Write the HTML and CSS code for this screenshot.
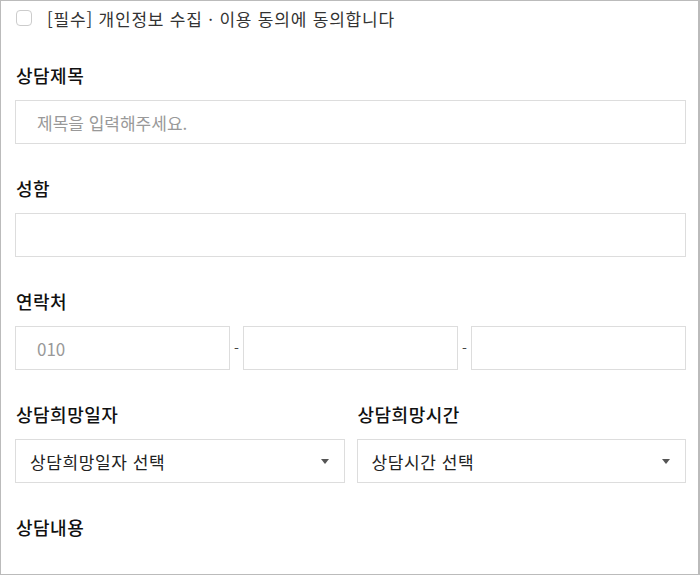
FILE: index.html
```html
<!DOCTYPE html>
<html lang="ko">
<head>
  <meta charset="UTF-8">
  <title>상담 신청</title>
  <link rel="stylesheet" href="styles.css">
</head>
<body>

  <form class="consult-form">
    <label class="agree">
      <input type="checkbox" class="agree-check">
      <span>[필수] 개인정보 수집 · 이용 동의에 동의합니다</span>
    </label>

    <div class="field">
      <label class="field-label">상담제목</label>
      <input type="text" class="text-input" placeholder="제목을 입력해주세요.">
    </div>

    <div class="field">
      <label class="field-label">성함</label>
      <input type="text" class="text-input">
    </div>

    <div class="field">
      <label class="field-label">연락처</label>
      <div class="phone-row">
        <input type="text" class="text-input" placeholder="010">
        <span class="dash">-</span>
        <input type="text" class="text-input">
        <span class="dash">-</span>
        <input type="text" class="text-input">
      </div>
    </div>

    <div class="field two-col">
      <div>
        <label class="field-label">상담희망일자</label>
        <div class="select-box">
          <span>상담희망일자 선택</span>
          <span class="arrow"></span>
        </div>
      </div>
      <div>
        <label class="field-label">상담희망시간</label>
        <div class="select-box">
          <span>상담시간 선택</span>
          <span class="arrow"></span>
        </div>
      </div>
    </div>

    <div class="field">
      <label class="field-label">상담내용</label>
    </div>
  </form>

</body>
</html>
```

FILE: styles.css
```css
* {
  box-sizing: border-box;
}

html, body {
  margin: 0;
  height: 100%;
}

body {
  font-family: "Noto Sans CJK KR", "Noto Sans", sans-serif;
  background-color: #fff;
  color: #111;
}

.consult-form {
  height: 575px;
  border: 1px solid #bbb;
  border-right-width: 2px;
  padding: 0 12px 0 14px;
}

.agree {
  display: flex;
  align-items: center;
  height: 34px;
  padding-left: 1px;
  font-size: 17px;
  letter-spacing: 0.8px;
  color: #333;
}

.agree-check {
  appearance: none;
  flex: none;
  width: 16px;
  height: 16px;
  margin: 0 15px 0 0;
  border: 1px solid #ccc;
  border-radius: 4px;
  background: #fff;
}

.field {
  margin-top: 28px;
}

.field + .field {
  margin-top: 32px;
}

.field-label {
  display: block;
  height: 24px;
  line-height: 24px;
  padding-left: 1px;
  margin-bottom: 13px;
  font-size: 18px;
  font-weight: 500;
  letter-spacing: 0.5px;
  color: #111;
}

.text-input {
  display: block;
  width: 100%;
  height: 44px;
  padding: 0 21px;
  border: 1px solid #ddd;
  border-radius: 0;
  font-family: inherit;
  font-size: 17px;
  color: #222;
  outline: none;
}

.text-input::placeholder {
  color: #999;
}

.phone-row {
  display: flex;
  align-items: center;
}

.phone-row .text-input {
  flex: 1;
  min-width: 0;
}

.dash {
  width: 13px;
  text-align: center;
  font-size: 14px;
  color: #444;
}

.two-col {
  display: grid;
  grid-template-columns: 1fr 1fr;
  column-gap: 12px;
}

.select-box {
  display: flex;
  align-items: center;
  justify-content: space-between;
  height: 44px;
  padding: 0 15px 0 14px;
  border: 1px solid #ddd;
  font-size: 17px;
  letter-spacing: 0.6px;
  color: #222;
}

.arrow {
  width: 0;
  height: 0;
  border-left: 4px solid transparent;
  border-right: 4px solid transparent;
  border-top: 5px solid #555;
}
```
